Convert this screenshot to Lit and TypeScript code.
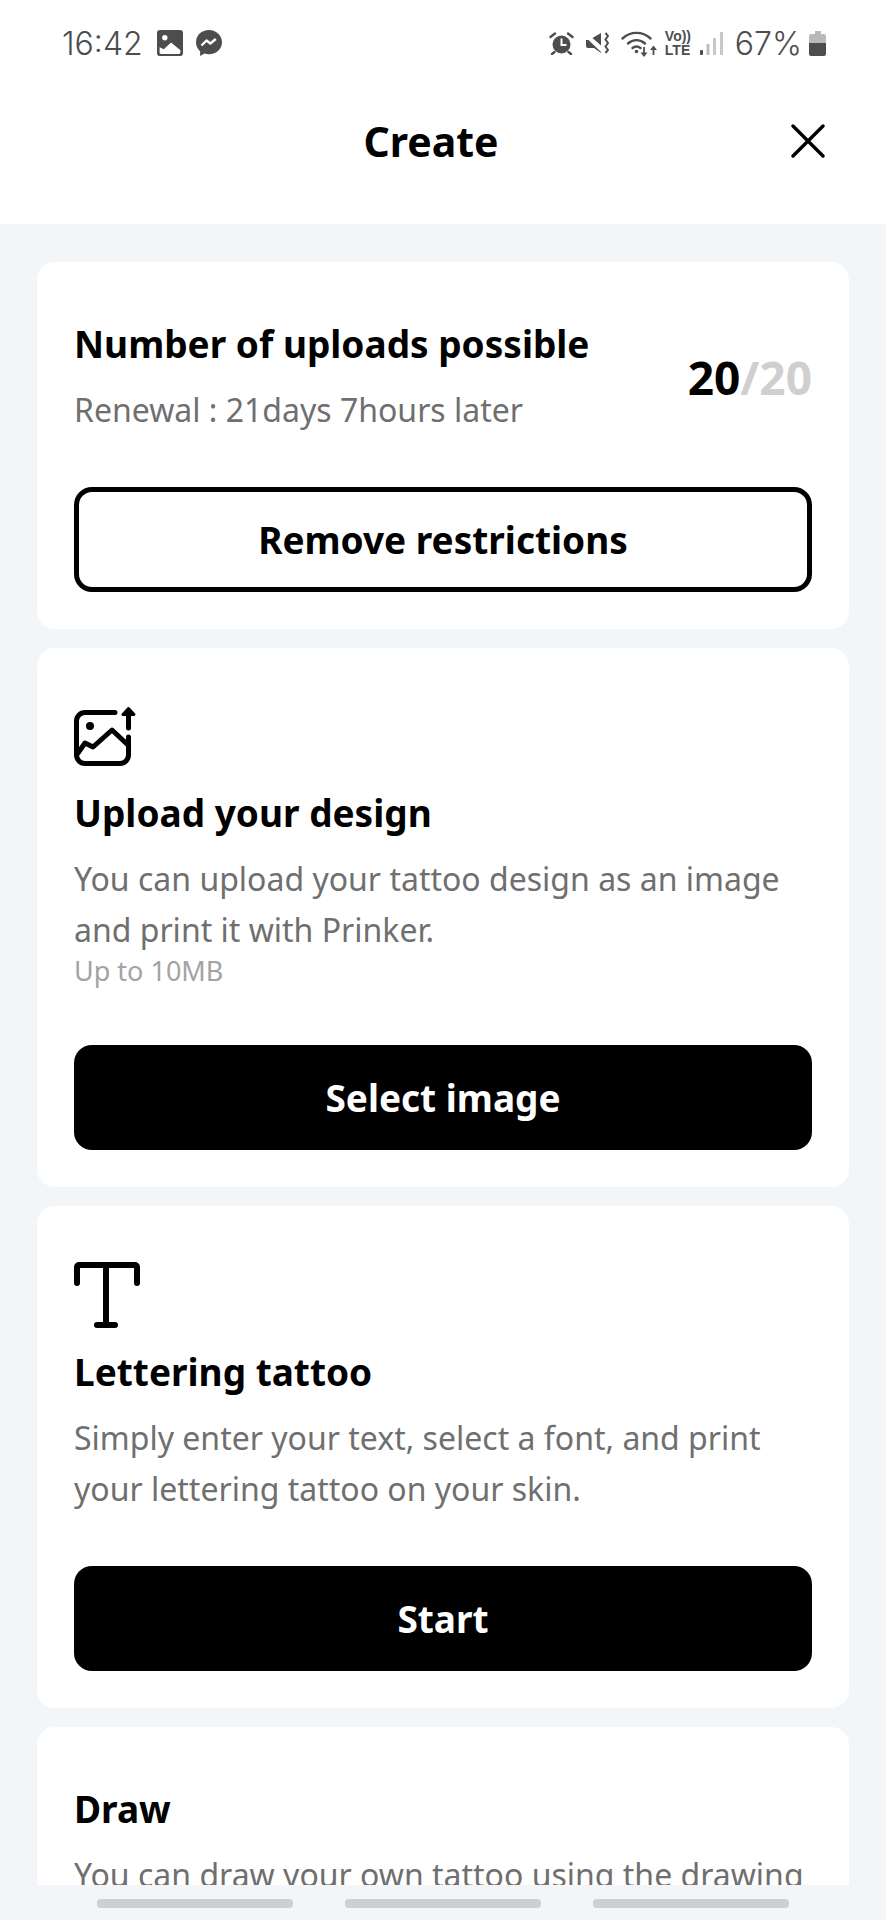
import { LitElement, html, css, svg } from 'lit';
import { customElement } from 'lit/decorators.js';

const galleryIcon = svg`<path fill="#4d4d4d" d="M3 0h19a3 3 0 0 1 3 3v19a3 3 0 0 1-3 3H3a3 3 0 0 1-3-3V3a3 3 0 0 1 3-3z"/><circle cx="7.500" cy="7.500" r="2.600" fill="#fff"/><path fill="#fff" d="M2.500 21v-4.500l4 2 7-6.500 9 7.500v2a1.500 1.500 0 0 1-1.500 1.500H4a1.500 1.500 0 0 1-1.500-2z"/>`;
const messengerIcon = svg`<path fill="#4d4d4d" d="M14 1C6.600 1 1 6.300 1 13.200c0 3.700 1.600 6.800 4.100 9v4.800l4.400-2.500c1.400.5 2.900.7 4.500.7 7.400 0 13-5.300 13-11.900S21.400 1 14 1z"/><path fill="none" stroke="#fff" stroke-width="2.400" stroke-linejoin="round" d="M6.500 16.500l5-5 3.800 3 5.500-4.500"/>`;
const alarmIcon = svg`<circle cx="12.500" cy="12.500" r="9" fill="#4d4d4d"/><path fill="none" stroke="#4d4d4d" stroke-width="2.400" stroke-linecap="round" d="M1.500 5L6 1.500M23.500 5L19 1.500M5.500 20l-2.500 2M19.500 20l2.500 2"/><path fill="none" stroke="#fff" stroke-width="2" d="M12.500 6.500v6.500h5"/>`;
const muteIcon = svg`<path fill="#4d4d4d" d="M1 8h2.500L16 20v1l-7-5H3a2 2 0 0 1-2-2z"/><path fill="#4d4d4d" d="M7.500 6L16 1v12.500z"/><path fill="none" stroke="#4d4d4d" stroke-width="2" d="M20.500 1l2.500 3-2.500 3.500 2.500 3.500-2.500 3.500 2.500 3.500-2.500 3"/>`;
const wifiIcon = svg`<g fill="none" stroke="#4d4d4d" stroke-width="2.400" stroke-linecap="round"><path d="M1.500 8.500c8-7.500 20-7.500 28 0"/><path d="M7 13.500c5-4.500 12-4.500 17 0"/><path d="M11.500 18c2.500-2 5.500-2 8 0"/></g><circle cx="15.500" cy="21.500" r="1.800" fill="#4d4d4d"/><path fill="none" stroke="#4d4d4d" stroke-width="1.800" d="M23 17v7M32.500 19v6"/><path fill="#4d4d4d" d="M19.500 22.500h7L23 27zM29 20l3.500-4.500L36 20z"/>`;
const signalIcon = svg`<rect x="0" y="18" width="3" height="5" rx="1" fill="#4d4d4d"/><rect x="6.500" y="12" width="3" height="11" fill="#bdbdbd"/><rect x="13" y="6" width="3" height="17" fill="#c8c8c8"/><rect x="20" y="0" width="3" height="23" fill="#c8c8c8"/>`;
const batteryIcon = svg`<path fill="#b9b9b9" d="M6 0h6v3h3a2 2 0 0 1 2 2v8H0V5a2 2 0 0 1 2-2h4z"/><path fill="#4d4d4d" d="M0 12h17v11a2 2 0 0 1-2 2H2a2 2 0 0 1-2-2z"/>`;
const closeIcon = svg`<path fill="none" stroke="#000" stroke-width="3.400" stroke-linecap="round" d="M2 2l30 30M32 2L2 32"/>`;
const uploadIcon = svg`<g fill="none" stroke="#000" stroke-width="5" stroke-linecap="round" stroke-linejoin="round"><path d="M41 8.500H11A8.500 8.500 0 0 0 2.500 17v34a8.500 8.500 0 0 0 8.500 8.500h35a8.500 8.500 0 0 0 8.500-8.500V33"/><path d="M4 49l7-10 8 4 19-17 16 15"/><path d="M54.500 24V8"/></g><path fill="#000" stroke="#000" stroke-width="3" stroke-linejoin="round" d="M49 10.500l5.500-6 5.500 6z"/><circle cx="16" cy="22" r="4" fill="#000"/>`;
const textIcon = svg`<path fill="none" stroke="#000" stroke-width="6" stroke-linecap="round" stroke-linejoin="round" d="M3 21V5a2 2 0 0 1 2-2h56a2 2 0 0 1 2 2v16M32 3v60M23 63h18"/>`;

@customElement('app-root')
export class AppRoot extends LitElement {
  static styles = css`
    :host {
      display: block;
      height: 1920px;
      position: relative;
      overflow: hidden;
      background: #f3f6f9;
      font-family: 'Noto Sans', 'Open Sans', sans-serif;
      color: #000;
    }
    .top {
      background: #fff;
      height: 224px;
      display: flex;
      flex-direction: column;
    }
    .status {
      display: flex;
      align-items: center;
      justify-content: space-between;
      height: 30px;
      margin-top: 28px;
      padding: 0 60px 0 62px;
      color: #4d4d4d;
      font-family: Inter, 'Noto Sans', sans-serif;
      font-size: 32px;
      font-weight: 300;
    }
    .status-left,
    .status-right {
      display: flex;
      align-items: center;
    }
    .status svg {
      display: block;
      flex: none;
    }
    .gap-7 {
      margin-left: 7px;
    }
    .gap-8 {
      margin-left: 8px;
    }
    .gap-11 {
      margin-left: 11px;
    }
    .gap-12 {
      margin-left: 12px;
    }
    .gap-14 {
      margin-left: 14px;
    }
    .lte {
      font-family: 'Liberation Sans', sans-serif;
      font-size: 14px;
      line-height: 14px;
      font-weight: 700;
      color: #4d4d4d;
      width: 24px;
      white-space: nowrap;
    }
    .nav {
      flex: 1;
      display: flex;
      align-items: center;
      justify-content: center;
      position: relative;
      font-size: 41px;
      font-weight: 700;
      padding-right: 24px;
    }
    .close {
      position: absolute;
      left: 791px;
      top: 66px;
    }
    .list {
      display: flex;
      flex-direction: column;
      gap: 19px;
      padding: 38px 37px 0;
    }
    .card {
      background: #fff;
      border-radius: 18px;
      padding: 56px 37px 37px;
    }
    .quota-row {
      display: flex;
      align-items: center;
      justify-content: space-between;
    }
    h2 {
      margin: 0;
      font-size: 37px;
      line-height: 52px;
      font-weight: 700;
    }
    p {
      margin: 14px 0 0;
      font-size: 32px;
      line-height: 51px;
      color: #6f6f6f;
    }
    .count {
      font-size: 46px;
      font-weight: 700;
    }
    .count span {
      color: #cfcfcf;
    }
    .small {
      font-size: 27px;
      line-height: 32px;
      color: #a3a3a3;
    }
    .btn {
      margin-top: 52px;
      height: 105px;
      box-sizing: border-box;
      border-radius: 18px;
      display: flex;
      align-items: center;
      justify-content: center;
      font-size: 37px;
      font-weight: 700;
      background: #000;
      color: #fff;
    }
    .small + .btn {
      margin-top: 58px;
    }
    .btn.outline {
      background: #fff;
      color: #000;
      border: 5px solid #000;
    }
    .icon {
      display: block;
    }
    .upload {
      margin-bottom: 21px;
    }
    .lettering {
      margin-bottom: 17px;
    }
    .dock {
      position: absolute;
      left: 0;
      right: 0;
      bottom: 0;
      height: 35px;
      background: #f3f5f8;
      display: flex;
      justify-content: center;
      gap: 52px;
      padding-top: 14px;
      box-sizing: border-box;
    }
    .dock i {
      display: block;
      width: 196px;
      height: 9px;
      border-radius: 4px;
      background: #cdcfd2;
    }
  `;

  render() {
    return html`
      <div class="top">
        <div class="status">
          <div class="status-left">
            <span>16:42</span>
            <svg class="gap-14" width="26" height="26" viewBox="0 0 25 25">${galleryIcon}</svg>
            <svg class="gap-12" width="28" height="28" viewBox="0 0 28 28">${messengerIcon}</svg>
          </div>
          <div class="status-right">
            <svg width="25" height="23" viewBox="0 0 25 23">${alarmIcon}</svg>
            <svg class="gap-11" width="24" height="22" viewBox="0 0 24 22">${muteIcon}</svg>
            <svg class="gap-12" width="36" height="27" viewBox="0 0 36 27">${wifiIcon}</svg>
            <div class="lte gap-8">Vo))<br />LTE</div>
            <svg class="gap-11" width="23" height="23" viewBox="0 0 23 23">${signalIcon}</svg>
            <span class="gap-12">67%</span>
            <svg class="gap-7" width="17" height="25" viewBox="0 0 17 25">${batteryIcon}</svg>
          </div>
        </div>
        <div class="nav">
          Create
          <svg class="close" width="34" height="34" viewBox="0 0 34 34">${closeIcon}</svg>
        </div>
      </div>
      <div class="list">
        <section class="card">
          <div class="quota-row">
            <div>
              <h2>Number of uploads possible</h2>
              <p>Renewal : 21days 7hours later</p>
            </div>
            <div class="count">20<span>/20</span></div>
          </div>
          <div class="btn outline">Remove restrictions</div>
        </section>
        <section class="card">
          <svg class="icon upload" width="64" height="62" viewBox="0 0 64 62">${uploadIcon}</svg>
          <h2>Upload your design</h2>
          <p>You can upload your tattoo design as an image and print it with Prinker.</p>
          <div class="small">Up to 10MB</div>
          <div class="btn">Select image</div>
        </section>
        <section class="card">
          <svg class="icon lettering" width="66" height="67" viewBox="0 0 66 67">${textIcon}</svg>
          <h2>Lettering tattoo</h2>
          <p>Simply enter your text, select a font, and print your lettering tattoo on your skin.</p>
          <div class="btn">Start</div>
        </section>
        <section class="card">
          <h2>Draw</h2>
          <p>You can draw your own tattoo using the drawing tool.</p>
        </section>
      </div>
      <div class="dock"><i></i><i></i><i></i></div>
    `;
  }
}
